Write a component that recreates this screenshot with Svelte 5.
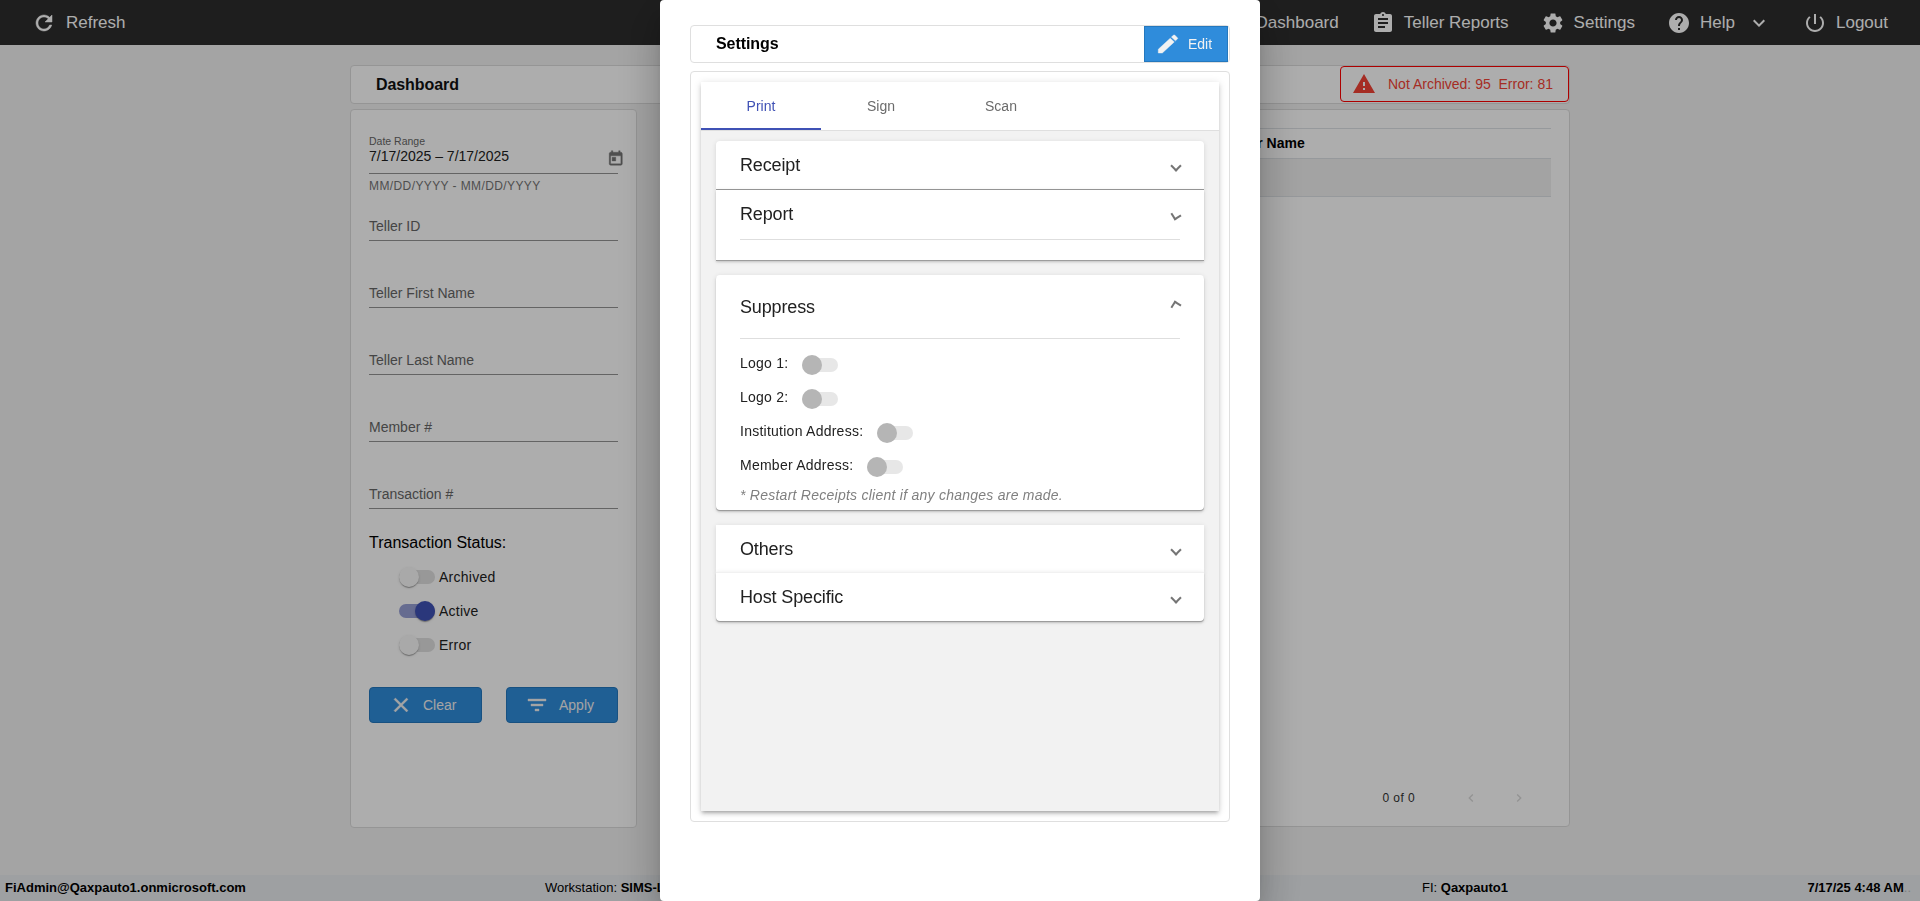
<script>
	import { onMount } from 'svelte';

	const icons = {
		refresh:
			'M17.65 6.35C16.2 4.9 14.21 4 12 4c-4.42 0-7.99 3.58-7.99 8s3.57 8 7.99 8c3.73 0 6.84-2.55 7.73-6h-2.08c-.82 2.33-3.04 4-5.65 4-3.31 0-6-2.69-6-6s2.69-6 6-6c1.66 0 3.14.69 4.22 1.78L13 11h7V4l-2.35 2.35z',
		dashboard: 'M3 13h8V3H3v10zm0 8h8v-6H3v6zm10 0h8V11h-8v10zm0-18v6h8V3h-8z',
		reports:
			'M19 3h-4.18C14.4 1.84 13.3 1 12 1c-1.3 0-2.4.84-2.82 2H5c-1.1 0-2 .9-2 2v14c0 1.1.9 2 2 2h14c1.1 0 2-.9 2-2V5c0-1.1-.9-2-2-2zm-7 0c.55 0 1 .45 1 1s-.45 1-1 1-1-.45-1-1 .45-1 1-1zm2 14H7v-2h7v2zm3-4H7v-2h10v2zm0-4H7V7h10v2z',
		settings:
			'M19.14 12.94c.04-.3.06-.61.06-.94 0-.32-.02-.64-.07-.94l2.03-1.58c.18-.14.23-.41.12-.61l-1.92-3.32c-.12-.22-.37-.29-.59-.22l-2.39.96c-.5-.38-1.03-.7-1.62-.94l-.36-2.54c-.04-.24-.24-.41-.48-.41h-3.84c-.24 0-.43.17-.47.41l-.36 2.54c-.59.24-1.13.57-1.62.94l-2.39-.96c-.22-.08-.47 0-.59.22L2.74 8.87c-.12.21-.08.47.12.61l2.03 1.58c-.05.3-.09.63-.09.94s.02.64.07.94l-2.03 1.58c-.18.14-.23.41-.12.61l1.92 3.32c.12.22.37.29.59.22l2.39-.96c.5.38 1.03.7 1.62.94l.36 2.54c.05.24.24.41.48.41h3.84c.24 0 .44-.17.47-.41l.36-2.54c.59-.24 1.13-.56 1.62-.94l2.39.96c.22.08.47 0 .59-.22l1.92-3.32c.12-.22.07-.47-.12-.61l-2.01-1.58zM12 15.6c-1.98 0-3.6-1.62-3.6-3.6s1.62-3.6 3.6-3.6 3.6 1.62 3.6 3.6-1.62 3.6-3.6 3.6z',
		help: 'M12 2C6.48 2 2 6.48 2 12s4.48 10 10 10 10-4.48 10-10S17.52 2 12 2zm1 17h-2v-2h2v2zm2.07-7.75l-.9.92C13.45 12.9 13 13.5 13 15h-2v-.5c0-1.1.45-2.1 1.17-2.83l1.24-1.26c.37-.36.59-.86.59-1.41 0-1.1-.9-2-2-2s-2 .9-2 2H8c0-2.21 1.79-4 4-4s4 1.79 4 4c0 .88-.36 1.68-.93 2.25z',
		expand: 'M16.59 8.59L12 13.17 7.41 8.59 6 10l6 6 6-6z',
		logout:
			'M13 3h-2v10h2V3zm4.83 2.17l-1.42 1.42C17.99 7.86 19 9.81 19 12c0 3.87-3.13 7-7 7s-7-3.13-7-7c0-2.19 1.01-4.14 2.58-5.42L6.17 5.17C4.23 6.82 3 9.26 3 12c0 4.97 4.03 9 9 9s9-4.03 9-9c0-2.74-1.23-5.18-3.17-6.83z',
		warning: 'M1 21h22L12 2 1 21zm12-3h-2v-2h2v2zm0-4h-2v-4h2v4z',
		today:
			'M19 3h-1V1h-2v2H8V1H6v2H5c-1.11 0-1.99.9-1.99 2L3 19c0 1.1.89 2 2 2h14c1.1 0 2-.9 2-2V5c0-1.1-.9-2-2-2zm0 16H5V8h14v11zM7 10h5v5H7z',
		clear:
			'M19 6.41L17.59 5 12 10.59 6.41 5 5 6.41 10.59 12 5 17.59 6.41 19 12 13.41 17.59 19 19 17.59 13.41 12z',
		filter: 'M10 18h4v-2h-4v2zM3 6v2h18V6H3zm3 7h12v-2H6v2z',
		edit: 'M3 17.25V21h3.75L17.81 9.94l-3.75-3.75L3 17.25zM20.71 7.04c.39-.39.39-1.02 0-1.41l-2.34-2.34c-.39-.39-1.02-.39-1.41 0l-1.83 1.83 3.75 3.75 1.83-1.83z',
		prev: 'M15.41 7.41L14 6l-6 6 6 6 1.41-1.41L10.83 12z',
		next: 'M10 6L8.59 7.41 13.17 12l-4.58 4.59L10 18l6-6z'
	};

	const fields = ['Teller ID', 'Teller First Name', 'Teller Last Name', 'Member #', 'Transaction #'];
	const tabs = ['Print', 'Sign', 'Scan'];
	const suppress = ['Logo 1:', 'Logo 2:', 'Institution Address:', 'Member Address:'];

	let status = $state([
		{ label: 'Archived', on: false },
		{ label: 'Active', on: true },
		{ label: 'Error', on: false }
	]);
	let activeTab = $state('Print');

	onMount(() => {
		document.title = 'Dashboard';
	});
</script>

{#snippet icon(name, size = 24)}
	<svg class="icon" width={size} height={size} viewBox="0 0 24 24" fill="currentColor">
		<path d={icons[name]} />
	</svg>
{/snippet}

<div class="app">
	<header>
		<a class="nav-item refresh" href="#refresh">{@render icon('refresh')} Refresh</a>
		<nav>
			<a class="nav-item" href="#dashboard">{@render icon('dashboard')} Dashboard</a>
			<a class="nav-item" href="#reports">{@render icon('reports')} Teller Reports</a>
			<a class="nav-item" href="#settings">{@render icon('settings')} Settings</a>
			<a class="nav-item" href="#help">
				{@render icon('help')}
				<span class="help-label">Help</span>
				{@render icon('expand')}
			</a>
			<a class="nav-item" href="#logout">{@render icon('logout')} Logout</a>
		</nav>
	</header>

	<main>
		<div class="title-bar">
			<h1>Dashboard</h1>
			<div class="alert">
				{@render icon('warning')}
				<span>Not Archived: 95 &nbsp;Error: 81</span>
			</div>
		</div>

		<div class="columns">
			<aside>
				<div class="date">
					<label for="range">Date Range</label>
					<div class="date-value" id="range">
						<span>7/17/2025 – 7/17/2025</span>
						{@render icon('today', 17.5)}
					</div>
				</div>
				<p class="hint">MM/DD/YYYY - MM/DD/YYYY</p>
				{#each fields as field}
					<div class="field">{field}</div>
				{/each}

				<h2>Transaction Status:</h2>
				<div class="status">
					{#each status as item}
						<button class="switch-row" onclick={() => (item.on = !item.on)}>
							<span class="switch" class:on={item.on}></span>
							{item.label}
						</button>
					{/each}
				</div>

				<div class="actions">
					<button class="btn">{@render icon('clear')} Clear</button>
					<button class="btn apply">{@render icon('filter')} Apply</button>
				</div>
			</aside>

			<section class="results">
				<div class="table">
					<div class="row head">
						<span>Status</span>
						<span>Teller ID</span>
						<span>Member Name</span>
					</div>
					<div class="row empty"></div>
				</div>
				<div class="paginator">
					<span>0 of 0</span>
					{@render icon('prev', 18)}
					{@render icon('next', 18)}
				</div>
			</section>
		</div>
	</main>

	<footer>
		<span><b>FiAdmin@Qaxpauto1.onmicrosoft.com</b></span>
		<span>Workstation: <b>SIMS-L</b></span>
		<span>FI: <b>Qaxpauto1</b></span>
		<span class="time"><b>7/17/25 4:48 AM</b><i>..</i></span>
	</footer>
</div>

<div class="backdrop">
	<div class="dialog">
		<div class="dialog-title">
			<h1>Settings</h1>
			<button class="btn edit">{@render icon('edit')} Edit</button>
		</div>

		<div class="dialog-body">
			<div class="sheet">
				<div class="tabs">
					{#each tabs as tab}
						<button class="tab" class:active={activeTab === tab} onclick={() => (activeTab = tab)}>
							{tab}
						</button>
					{/each}
				</div>

				<div class="panels">
					<div class="panel first">
						<div class="panel-head">Receipt <span class="chevron"></span></div>
					</div>
					<div class="panel report">
						<div class="panel-head">Report <span class="chevron opening"></span></div>
						<hr />
					</div>

					<div class="panel suppress">
						<div class="panel-head tall">Suppress <span class="chevron closing"></span></div>
						<hr />
						{#each suppress as label}
							<div class="option">
								{label}
								<span class="switch disabled"></span>
							</div>
						{/each}
						<p class="note">* Restart Receipts client if any changes are made.</p>
					</div>

					<div class="panel others">
						<div class="panel-head">Others <span class="chevron"></span></div>
					</div>
					<div class="panel last">
						<div class="panel-head">Host Specific <span class="chevron"></span></div>
					</div>
				</div>
			</div>
		</div>
	</div>
</div>

<style>
	:global(body) {
		margin: 0;
		overflow: hidden;
		font-family: 'Liberation Sans', Arial, sans-serif;
		font-size: 14px;
	}

	.app,
	.app *,
	.backdrop,
	.backdrop * {
		box-sizing: border-box;
	}

	h1,
	h2,
	p {
		margin: 0;
	}

	button {
		font-family: inherit;
		font-size: 14px;
		padding: 0;
		border: none;
		background: none;
		cursor: pointer;
	}

	.icon {
		flex: none;
		display: block;
	}

	.app {
		height: 100vh;
		display: flex;
		flex-direction: column;
		background: #f2f2f2;
	}

	header {
		height: 45px;
		flex: none;
		display: flex;
		justify-content: space-between;
		align-items: center;
		padding: 0 32px;
		background: #2d2d2d;
	}

	nav {
		display: flex;
		gap: 32px;
	}

	.nav-item {
		display: flex;
		align-items: center;
		gap: 9px;
		font-size: 17px;
		line-height: 24px;
		color: #fff;
		text-decoration: none;
		white-space: nowrap;
	}

	.refresh {
		gap: 10px;
	}

	.refresh .icon {
		stroke: currentColor;
		stroke-width: 0.5;
	}

	.help-label {
		margin-right: 3px;
	}

	main {
		width: 1220px;
		margin: 20px auto 0;
		flex: 1;
	}

	.title-bar {
		height: 39px;
		display: flex;
		align-items: flex-start;
		justify-content: space-between;
		padding-left: 25px;
		background: #fff;
		border: 1px solid #dcdcdc;
		border-radius: 4px;
	}

	h1 {
		font-size: 16px;
		line-height: 37px;
		letter-spacing: -0.08px;
		color: #111;
	}

	.alert {
		width: 229px;
		height: 36px;
		display: flex;
		align-items: center;
		gap: 12px;
		padding-left: 11px;
		border: 1px solid #f00;
		border-radius: 4px;
		color: #f44336;
		white-space: nowrap;
	}

	.columns {
		display: flex;
		align-items: flex-start;
		gap: 24px;
		margin-top: 5px;
	}

	aside,
	.results {
		background: #fff;
		border: 1px solid #dcdcdc;
		border-radius: 4px;
	}

	aside {
		width: 287px;
		height: 719px;
		padding: 25px 18px 0;
	}

	.date {
		border-bottom: 1px solid #949494;
		padding-bottom: 8px;
	}

	.date label {
		display: block;
		font-size: 10.5px;
		line-height: 12px;
		margin-bottom: 2px;
		color: #666;
	}

	.date-value {
		height: 16px;
		display: flex;
		justify-content: space-between;
		line-height: 14px;
		color: #212121;
	}

	.date-value .icon {
		margin: 1px -6px 0 0;
		color: #757575;
		stroke: currentColor;
		stroke-width: 0.5;
	}

	.hint {
		margin-top: 4px;
		font-size: 12px;
		line-height: 16px;
		letter-spacing: 0.4px;
		color: #757575;
	}

	.field {
		height: 67px;
		padding-top: 44px;
		line-height: 17px;
		color: #666;
		border-bottom: 1px solid #949494;
	}

	.hint + .field {
		height: 47px;
		padding-top: 24px;
	}

	h2 {
		margin-top: 24px;
		font-size: 16px;
		font-weight: normal;
		line-height: 20px;
	}

	.status {
		display: flex;
		flex-direction: column;
		margin: 7px 0 25px;
		padding-left: 30px;
	}

	.switch-row {
		height: 34px;
		display: flex;
		align-items: center;
		gap: 4px;
		letter-spacing: 0.25px;
		color: #212121;
	}

	.switch {
		width: 36px;
		height: 14px;
		flex: none;
		display: flex;
		align-items: center;
		border-radius: 7px;
		background: #e0e0e0;
	}

	.switch::before {
		content: '';
		width: 20px;
		height: 20px;
		flex: none;
		border-radius: 50%;
		background: #fafafa;
		box-shadow:
			0 2px 1px -1px rgba(0, 0, 0, 0.2),
			0 1px 1px 0 rgba(0, 0, 0, 0.14),
			0 1px 3px 0 rgba(0, 0, 0, 0.12);
	}

	.switch.on {
		justify-content: flex-end;
		background: #979fd5;
	}

	.switch.on::before {
		background: #3f51b5;
	}

	.switch.disabled {
		background: #e7e7e7;
	}

	.switch.disabled::before {
		background: #b5b5b5;
		box-shadow: none;
	}

	.btn {
		height: 36px;
		display: flex;
		align-items: center;
		gap: 10px;
		padding-left: 19px;
		border: 1px solid #2478be;
		border-radius: 4px;
		background: #2f8cdb;
		color: #f2f2f2;
	}

	.btn .icon {
		stroke: currentColor;
		stroke-width: 0.4;
	}

	.btn.apply {
		padding-left: 18px;
	}

	.actions {
		display: grid;
		grid-template-columns: 113px 112px;
		gap: 24px;
	}

	.results {
		flex: 1;
		height: 718px;
		display: flex;
		flex-direction: column;
		justify-content: space-between;
		padding: 18px 18px 19px;
	}

	.row {
		display: grid;
		grid-template-columns: 300px 223px 1fr;
		align-items: center;
		padding-left: 6px;
		border-top: 1px solid #dee2e6;
		font-weight: bold;
	}

	.head {
		height: 30px;
		padding-bottom: 2px;
	}

	.empty {
		height: 39px;
		background: #f0f0f0;
		border-bottom: 1px solid #dee2e6;
	}

	.paginator {
		display: flex;
		justify-content: flex-end;
		align-items: center;
		gap: 30px;
		padding-right: 23px;
		font-size: 12px;
		letter-spacing: 0.4px;
		color: #333;
	}

	.paginator span {
		margin-right: 17px;
	}

	.paginator .icon {
		color: #d9d9d9;
		transform: scale(0.9);
	}

	footer {
		height: 26px;
		flex: none;
		display: grid;
		grid-template-columns: 540px 877px 1fr auto;
		align-items: center;
		padding: 0 9px 2px 5px;
		font-size: 13px;
		background: #e9ecef;
	}

	.time i {
		color: #bbb;
		font-style: normal;
	}

	.backdrop {
		position: fixed;
		inset: 0;
		display: flex;
		justify-content: center;
		background: rgba(0, 0, 0, 0.32);
	}

	.dialog {
		width: 600px;
		padding: 25px 30px;
		background: #fff;
		border-radius: 4px;
		box-shadow:
			0 11px 15px -7px rgba(0, 0, 0, 0.2),
			0 24px 38px 3px rgba(0, 0, 0, 0.14),
			0 9px 46px 8px rgba(0, 0, 0, 0.12);
	}

	.dialog-title {
		height: 38px;
		display: flex;
		justify-content: space-between;
		padding: 0 1px 0 25px;
		border: 1px solid #dfdfdf;
		border-radius: 4px;
	}

	.dialog-title h1 {
		line-height: 35px;
		color: #000;
	}

	.edit {
		width: 84px;
		padding-left: 11px;
		gap: 8px;
		border-radius: 0;
	}

	.edit .icon {
		transform: scaleX(1.08);
	}

	.dialog-body {
		height: 751px;
		margin-top: 8px;
		padding: 10px;
		border: 1px solid #dfdfdf;
		border-radius: 4px;
	}

	.sheet {
		height: 729px;
		background: #f2f2f2;
		box-shadow:
			0 3px 3px -2px rgba(0, 0, 0, 0.2),
			0 3px 4px 0 rgba(0, 0, 0, 0.14),
			0 1px 8px 0 rgba(0, 0, 0, 0.12);
	}

	.tabs {
		height: 49px;
		display: flex;
		background: #fff;
		border-bottom: 1px solid #dfdfdf;
	}

	.tab {
		width: 120px;
		border-bottom: 2px solid transparent;
		border-top: 2px solid transparent;
		color: #6b6b6b;
	}

	.tab.active {
		color: #3f51b5;
		border-bottom-color: #3f51b5;
	}

	.panels {
		padding: 10px 15px;
	}

	.panel {
		padding: 0 24px;
		background: #fff;
		color: #212121;
		box-shadow:
			0 3px 1px -2px rgba(0, 0, 0, 0.2),
			0 2px 2px 0 rgba(0, 0, 0, 0.14),
			0 1px 5px 0 rgba(0, 0, 0, 0.12);
	}

	.panel.first {
		border-radius: 4px 4px 0 0;
		border-bottom: 1px solid #999;
	}

	.panel-head {
		height: 48px;
		display: flex;
		align-items: center;
		justify-content: space-between;
		font-size: 18px;
		letter-spacing: -0.14px;
	}

	.report {
		height: 70px;
	}

	.report .panel-head {
		margin-bottom: 1px;
	}

	.suppress {
		height: 235px;
		margin: 15px 0;
		border-radius: 4px;
		letter-spacing: 0.25px;
	}

	.first,
	.others {
		box-shadow: 0 1px 5px 0 rgba(0, 0, 0, 0.12);
	}

	.report,
	.suppress,
	.last {
		box-shadow:
			0 1px 0 0 #9c9c9c,
			0 2px 2px 0 rgba(0, 0, 0, 0.14),
			0 1px 5px 0 rgba(0, 0, 0, 0.12);
	}

	.panel-head.tall {
		height: 63px;
		padding-top: 1px;
	}

	hr {
		height: 1px;
		margin: 0;
		border: none;
		background: #dedede;
	}

	.suppress hr {
		margin-bottom: 7px;
	}

	.option {
		height: 34px;
		display: flex;
		align-items: center;
		gap: 14px;
	}

	.option .switch {
		margin-top: 3px;
	}

	.note {
		line-height: 20px;
		margin-top: 3px;
		font-style: italic;
		color: #808080;
	}

	.others .panel-head {
		height: 47px;
		padding-top: 1px;
	}

	.last {
		border-radius: 0 0 4px 4px;
		border-top: 1px solid #f1f1f1;
	}

	.chevron {
		width: 8px;
		height: 8px;
		margin-top: 2px;
		border: solid #757575;
		border-width: 0 2px 2px 0;
		transform: rotate(45deg);
	}

	.chevron.opening {
		transform: rotate(58deg);
	}

	.chevron.closing {
		margin-top: -2px;
		transform: rotate(212deg);
	}
</style>
